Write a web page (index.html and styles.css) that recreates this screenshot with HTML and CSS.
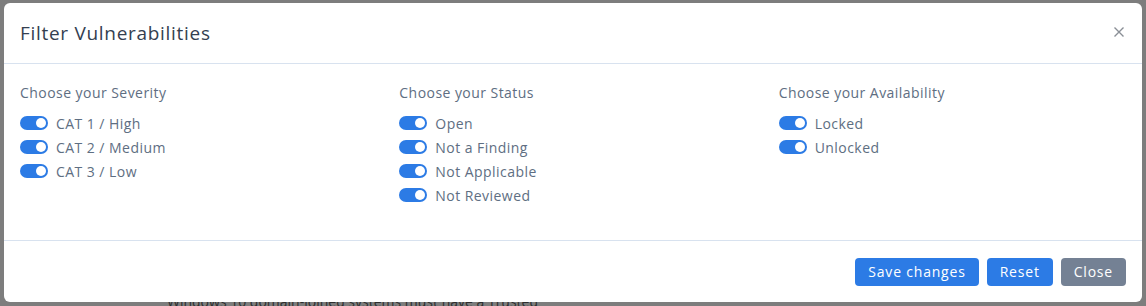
FILE: index.html
```html
<!DOCTYPE html>
<html>
<head>
<meta charset="utf-8">
<link rel="stylesheet" href="styles.css">
</head>
<body>
<div class="backdrop-text">Windows 10 domain-joined systems must have a Trusted</div>
<div class="modal">
  <div class="modal-header">
    <h5 class="modal-title">Filter Vulnerabilities</h5>
    <button class="btn-close" aria-label="Close">
      <svg width="12" height="12" viewBox="0 0 12 12"><path d="M1.5 1.5 L10.5 10.5 M10.5 1.5 L1.5 10.5" stroke="#8a8f96" stroke-width="1.4" fill="none"/></svg>
    </button>
  </div>
  <div class="modal-body">
    <div class="col">
      <div class="group-label">Choose your Severity</div>
      <label class="switch-row"><span class="switch"></span>CAT 1 / High</label>
      <label class="switch-row"><span class="switch"></span>CAT 2 / Medium</label>
      <label class="switch-row"><span class="switch"></span>CAT 3 / Low</label>
    </div>
    <div class="col">
      <div class="group-label">Choose your Status</div>
      <label class="switch-row"><span class="switch"></span>Open</label>
      <label class="switch-row"><span class="switch"></span>Not a Finding</label>
      <label class="switch-row"><span class="switch"></span>Not Applicable</label>
      <label class="switch-row"><span class="switch"></span>Not Reviewed</label>
    </div>
    <div class="col">
      <div class="group-label">Choose your Availability</div>
      <label class="switch-row"><span class="switch"></span>Locked</label>
      <label class="switch-row"><span class="switch"></span>Unlocked</label>
    </div>
  </div>
  <div class="modal-footer">
    <button class="btn btn-primary">Save changes</button>
    <button class="btn btn-primary">Reset</button>
    <button class="btn btn-secondary">Close</button>
  </div>
</div>
</body>
</html>
```
FILE: styles.css
```css
html, body {
  margin: 0;
  height: 100%;
}
body {
  background: #7d7d7d;
  padding: 3px 4px 0 4px;
  box-sizing: border-box;
  font-family: "Open Sans", "Liberation Sans", sans-serif;
  position: relative;
  overflow: hidden;
}
.backdrop-text {
  position: absolute;
  left: 167px;
  top: 292px;
  font-size: 14px;
  color: #2e2e2e;
  z-index: 0;
}
.modal {
  position: relative;
  z-index: 1;
  width: 1138px;
  height: 299px;
  background: #fff;
  border-radius: 6px;
  display: flex;
  flex-direction: column;
  box-sizing: border-box;
}
.modal-header {
  height: 60px;
  border-bottom: 1px solid #d8e2ef;
  display: flex;
  align-items: center;
  justify-content: space-between;
  padding: 0 16px;
  flex-shrink: 0;
}
.modal-title {
  margin: 0;
  font-size: 19px;
  font-weight: 500;
  color: #344050;
  letter-spacing: 0.7px;
}
.btn-close {
  border: none;
  background: none;
  padding: 0;
  margin-right: 1px;
  margin-top: -2px;
  width: 12px;
  height: 12px;
  display: flex;
}
.modal-body {
  display: grid;
  grid-template-columns: repeat(3, 1fr);
  height: 176px;
  border-bottom: 1px solid #d8e2ef;
  flex-shrink: 0;
}
.col {
  padding: 18px 16px 0 16px;
  display: flex;
  flex-direction: column;
}
.group-label {
  font-size: 14px;
  line-height: 21px;
  color: #5e6e82;
  margin-bottom: 8px;
  letter-spacing: 0.45px;
}
.switch-row {
  display: flex;
  align-items: center;
  height: 24px;
  font-size: 14px;
  color: #5e6e82;
  letter-spacing: 0.45px;
}
.switch {
  width: 28px;
  height: 14px;
  border-radius: 7px;
  background: #2c7be5;
  margin-right: 8px;
  position: relative;
  flex-shrink: 0;
}
.switch::after {
  content: "";
  position: absolute;
  right: 2px;
  top: 2px;
  width: 10px;
  height: 10px;
  border-radius: 50%;
  background: #fff;
}
.modal-footer {
  flex: 1;
  display: flex;
  justify-content: flex-end;
  align-items: center;
  gap: 8px;
  padding: 0 16px;
}
.btn {
  height: 28px;
  border: none;
  border-radius: 4px;
  font-family: inherit;
  font-size: 14px;
  color: #fff;
  padding: 0 13px;
  font-weight: 500;
  letter-spacing: 0.8px;
}
.btn-primary {
  background: #2c7be5;
}
.btn-secondary {
  background: #748194;
}
```
